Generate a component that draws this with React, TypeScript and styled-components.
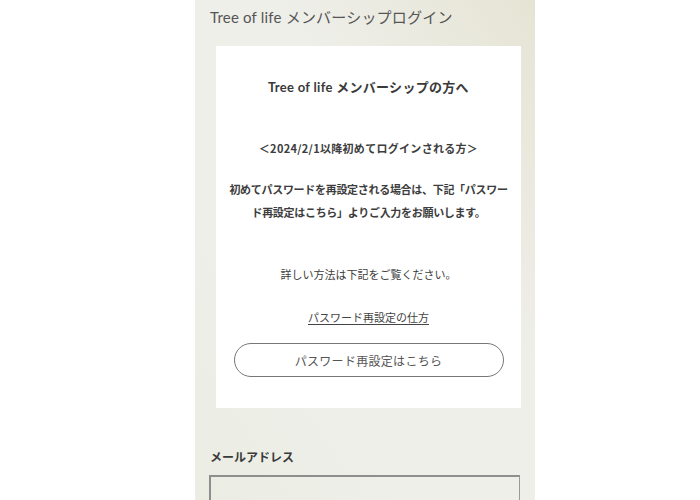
import React from "react";
import styled, { createGlobalStyle } from "styled-components";

const GlobalStyle = createGlobalStyle`
  html, body {
    margin: 0;
    padding: 0;
    background: #ffffff;
  }
  body {
    font-family: Lato, "Noto Sans CJK JP", sans-serif;
    color: #3d3d3d;
  }
`;

const Page = styled.div`
  display: flex;
  justify-content: center;
  padding-left: 30px;
  height: 500px;
  overflow: hidden;
`;

const Column = styled.main`
  width: 340px;
  box-sizing: border-box;
  padding: 0 15px 0 14px;
  background: linear-gradient(to bottom left, #e5e4d4 0%, #efefea 38%, #eeefe9 70%, #ebede3 100%);
`;

const PageTitle = styled.h1`
  margin: 0;
  padding: 6px 0 0 1px;
  font-size: 15px;
  line-height: 22px;
  font-weight: 400;
  color: #555;
  letter-spacing: 0.2px;
`;

const Card = styled.section`
  margin: 18px 0 0 7px;
  width: 305px;
  box-sizing: border-box;
  background: #fff;
  padding: 31px 10px 31px 10px;
  text-align: center;
`;

const CardTitle = styled.h2`
  margin: 0;
  font-size: 13px;
  line-height: 20px;
  font-weight: 700;
  color: #3a3a3a;
  letter-spacing: 0.3px;
`;

const Text = styled.p<{ $gap: number; $bold?: boolean; $lh?: number; $track?: number }>`
  margin: ${(p) => p.$gap}px 0 0;
  font-family: "Noto Sans CJK JP", sans-serif;
  font-size: 11px;
  line-height: ${(p) => p.$lh ?? 20}px;
  font-weight: ${(p) => (p.$bold ? 700 : 400)};
  letter-spacing: ${(p) => p.$track ?? 0}px;
  color: #3d3d3d;
  white-space: nowrap;
`;

const HowTo = styled.a`
  display: block;
  margin-top: 23px;
  font-family: "Noto Sans CJK JP", sans-serif;
  font-size: 11px;
  line-height: 20px;
  color: #444;
  text-decoration: underline;
  text-underline-offset: 2px;
`;

const ResetButton = styled.button`
  display: block;
  width: 270px;
  height: 34px;
  margin: 16px auto 0;
  border: 1px solid #777;
  border-radius: 17px;
  background: #fff;
  font-family: "Noto Sans CJK JP", sans-serif;
  font-size: 12px;
  color: #555;
  letter-spacing: 0.3px;
  cursor: pointer;
`;

const Label = styled.label`
  display: block;
  margin: 39px 0 0 1px;
  font-family: "Noto Sans CJK JP", sans-serif;
  font-size: 12px;
  line-height: 20px;
  font-weight: 700;
  color: #3a3a3a;
`;

const Input = styled.input`
  display: block;
  margin-top: 8px;
  width: 311px;
  height: 40px;
  box-sizing: border-box;
  border: 1px solid #9a9a9a;
  border-top: 2px solid #8e8e8e;
  border-left: 2px solid #8e8e8e;
  background: transparent;
`;

export default function App() {
  return (
    <>
      <GlobalStyle />
      <Page>
        <Column>
          <PageTitle>Tree of life メンバーシップログイン</PageTitle>
          <Card>
            <CardTitle>Tree of life メンバーシップの方へ</CardTitle>
            <Text $gap={41} $bold $track={0.3}>
              ＜2024/2/1以降初めてログインされる方＞
            </Text>
            <Text $gap={20} $bold $lh={23} $track={-0.3}>
              初めてパスワードを再設定される場合は、下記「パスワー
              <br />
              ド再設定はこちら」よりご入力をお願いします。
            </Text>
            <Text $gap={40}>詳しい方法は下記をご覧ください。</Text>
            <HowTo href="#">パスワード再設定の仕方</HowTo>
            <ResetButton type="button">パスワード再設定はこちら</ResetButton>
          </Card>
          <Label htmlFor="email">メールアドレス</Label>
          <Input id="email" type="email" />
        </Column>
      </Page>
    </>
  );
}
